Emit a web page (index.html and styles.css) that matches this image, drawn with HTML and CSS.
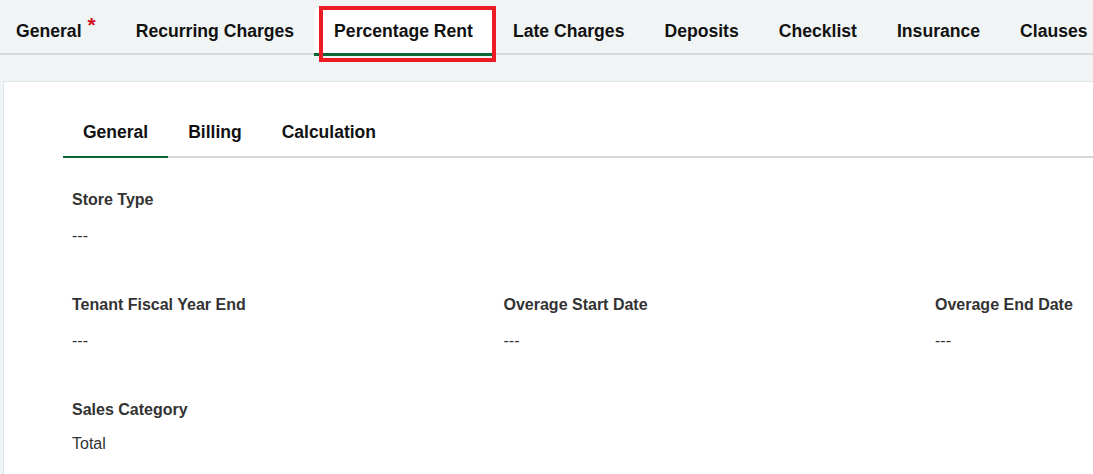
FILE: index.html
```html
<!DOCTYPE html>
<html lang="en">

<head>
    <meta charset="UTF-8">
    <meta name="viewport" content="width=device-width, initial-scale=1.0">
    <title>Lease - Percentage Rent</title>
    <link rel="stylesheet" href="styles.css">
</head>

<body>
    <nav class="main-tabs">
        <div class="main-tab first">General <span class="required">*</span></div>
        <div class="main-tab">Recurring Charges</div>
        <div class="main-tab active">
            Percentage Rent
            <span class="highlight-box"></span>
        </div>
        <div class="main-tab">Late Charges</div>
        <div class="main-tab">Deposits</div>
        <div class="main-tab">Checklist</div>
        <div class="main-tab">Insurance</div>
        <div class="main-tab">Clauses</div>
    </nav>

    <div class="card">
        <div class="sub-tabs">
            <div class="sub-tab active">General</div>
            <div class="sub-tab">Billing</div>
            <div class="sub-tab">Calculation</div>
        </div>

        <div class="fields">
            <div class="field">
                <div class="field-label">Store Type</div>
                <div class="field-value">---</div>
            </div>
            <div class="field-row">
                <div class="field">
                    <div class="field-label">Tenant Fiscal Year End</div>
                    <div class="field-value">---</div>
                </div>
                <div class="field">
                    <div class="field-label">Overage Start Date</div>
                    <div class="field-value">---</div>
                </div>
                <div class="field">
                    <div class="field-label">Overage End Date</div>
                    <div class="field-value">---</div>
                </div>
            </div>
            <div class="field">
                <div class="field-label">Sales Category</div>
                <div class="field-value text">Total</div>
            </div>
        </div>
    </div>
</body>

</html>
```

FILE: styles.css
```css
body {
    font-family: "Liberation Sans", Arial, sans-serif;
    background-color: #f1f4f5;
    margin: 0;
    padding: 0;
    overflow: hidden;
    color: #333;
}

/* top tab strip */
.main-tabs {
    display: flex;
    padding-top: 7px;
    border-bottom: 2px solid #d6d7d8;
    white-space: nowrap;
}

.main-tab {
    position: relative;
    height: 44px;
    padding: 2px 20px 0;
    display: flex;
    align-items: center;
    font-size: 17.6px;
    font-weight: bold;
    color: #111;
}

.main-tab.first {
    padding-left: 16px;
}

.main-tab.active {
    background-color: #fff;
    border-radius: 6px 6px 0 0;
    border-bottom: 3px solid #0b6636;
    margin-bottom: -3px;
}

.required {
    color: #d0111b;
    font-size: 21px;
    margin-left: 6px;
    position: relative;
    top: -6px;
}

.highlight-box {
    position: absolute;
    left: 5px;
    right: -3px;
    top: -1px;
    bottom: -9px;
    border: 4px solid #ed1c24;
}

/* content card */
.card {
    background-color: #fff;
    border: 1px solid #dde3ea;
    margin: 26px -20px 0 3px;
    padding-top: 30px;
    height: 500px;
}

.sub-tabs {
    display: flex;
    margin-left: 59px;
    border-bottom: 2px solid #d6d7d8;
}

.sub-tab {
    padding: 10px 20px 14px;
    line-height: 20px;
    font-size: 17.5px;
    font-weight: bold;
    color: #111;
}

.sub-tab.active {
    border-bottom: 2px solid #0b6636;
    margin-bottom: -2px;
}

.fields {
    padding: 32px 0 0 68px;
    display: flex;
    flex-direction: column;
    gap: 49px;
}

.field-row {
    display: grid;
    grid-template-columns: repeat(3, 431.5px);
}

.field-label {
    font-size: 16px;
    font-weight: bold;
    line-height: 20px;
    margin-bottom: 16px;
}

.field-value {
    font-size: 16px;
    line-height: 20px;
}

.field-value.text {
    margin-top: -2px;
}
```
